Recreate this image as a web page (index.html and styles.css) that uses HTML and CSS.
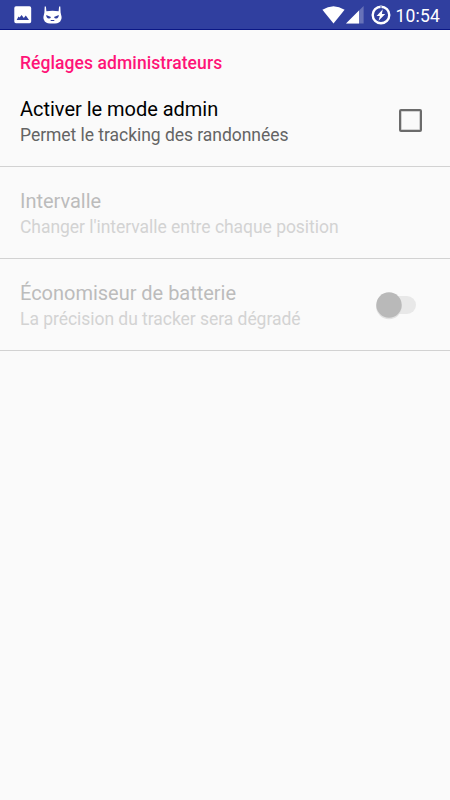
FILE: index.html
```html
<!DOCTYPE html>
<html lang="fr">
<head>
	<title>Réglages administrateurs</title>
	<meta charset="UTF-8">
	<meta name="viewport" content="width=device-width, initial-scale=1.0">
	<link rel="stylesheet" href="styles.css">
</head>
<body>
	<header class="status-bar">
		<div class="notifications">
			<svg width="18" height="18" viewBox="0 0 18 18">
				<path fill="#fff" fill-rule="evenodd" d="M2 .3h13.500a1.700 1.700 0 0 1 1.700 1.700v13.500a1.700 1.700 0 0 1-1.700 1.700H2A1.700 1.700 0 0 1 .3 15.500V2A1.700 1.700 0 0 1 2 .3zM2.700 14h12.300l-3.200-4.600-2 2.500-2.200-2.900-2 2.600-1.100-1z"/>
			</svg>
			<svg width="20" height="18" viewBox="0 0 20 18">
				<path fill="#fff" d="M1.700 .5h1.200l.5 4.700Q9.500 4.300 15.600 5.200L16.100 .5h1.200l.3 6 1 4.500q.3 2.500-1.400 4.400-2.200 2.200-7.700 2.200t-7.700-2.200Q.1 13.500.4 11l1-4.500z"/>
				<path fill="#303f9f" d="M3.200 9l4.800 1.900q-.6 1.800-2.300 1.600-2.300-.3-2.500-3.500zM15.800 9l-4.800 1.900q.6 1.800 2.300 1.600 2.300-.3 2.500-3.500z"/>
				<path fill="none" stroke="#303f9f" stroke-width="1" d="M7.700 14.500h3.600"/>
			</svg>
		</div>
		<div class="system">
			<svg class="wifi" width="23" height="18" viewBox="0 0 23 18">
				<path fill="#fff" d="M.4 3.700Q11.500-3.300 22.600 3.700L11.500 17.600z"/>
			</svg>
			<svg class="signal" width="18" height="18" viewBox="0 0 18 18">
				<path fill="#6772b8" d="M17.600 0v17.600H0z"/>
				<path fill="#fff" d="M13 4.600v13H0z"/>
			</svg>
			<svg class="battery" width="20" height="20" viewBox="0 0 20 20">
				<circle cx="10" cy="10" r="8.300" fill="none" stroke="#fff" stroke-width="2.400"/>
				<path stroke="#959dce" stroke-width="2.400" d="M9.200 1.700h1.600"/>
				<path fill="#fff" d="M11.800 4.300L5.600 10.900h3.200l-1.200 4.800 6.600-6.600h-3.300z"/>
			</svg>
			<span class="clock">10:54</span>
		</div>
	</header>
	<main>
		<h1>Réglages administrateurs</h1>
		<ul class="preferences">
			<li class="preference">
				<div class="text">
					<div class="title">Activer le mode admin</div>
					<div class="summary">Permet le tracking des randonnées</div>
				</div>
				<span class="checkbox" role="checkbox" aria-checked="false"></span>
			</li>
			<li class="preference disabled">
				<div class="text">
					<div class="title">Intervalle</div>
					<div class="summary">Changer l'intervalle entre chaque position</div>
				</div>
			</li>
			<li class="preference disabled">
				<div class="text">
					<div class="title">Économiseur de batterie</div>
					<div class="summary">La précision du tracker sera dégradé</div>
				</div>
				<svg class="switch" width="44" height="34" viewBox="0 0 44 34">
					<rect x="4" y="8" width="37" height="18" rx="9" fill="#e8e8e8"/>
					<circle cx="14" cy="18.200" r="13" fill="#e2e2e2"/>
					<circle cx="14" cy="17" r="12.700" fill="#b9b9b9"/>
				</svg>
			</li>
		</ul>
	</main>
</body>
</html>
```

FILE: styles.css
```css
body {
	margin: 0;
	min-height: 800px;
	font-family: Roboto, sans-serif;
	background-color: #fafafa;
}
.status-bar {
	display: flex;
	justify-content: space-between;
	box-sizing: border-box;
	height: 30px;
	padding: 0 10px 0 14px;
	background-color: #303f9f;
	border-bottom: 1px solid #0b1785;
	color: #fff;
}
.notifications, .system {
	display: flex;
	align-items: flex-start;
	padding-top: 6px;
}
.notifications {
	gap: 11px;
}
.signal {
	margin-left: 1px;
}
.battery {
	margin: -1px 4px 0 7px;
}
.clock {
	font-size: 17.5px;
	line-height: 20px;
	letter-spacing: 0.2px;
}
h1 {
	margin: 0;
	padding: 21px 20px 0;
	height: 24px;
	font-size: 17.5px;
	font-weight: 500;
	line-height: 25px;
	letter-spacing: 0.08px;
	color: #ff1478;
}
.preferences {
	margin: 0;
	padding: 0;
	list-style: none;
}
.preference {
	display: flex;
	align-items: center;
	justify-content: space-between;
	box-sizing: border-box;
	height: 92px;
	padding: 0 28px 0 20px;
	border-bottom: 1px solid #d2d2d2;
}
.text {
	padding-top: 2px;
}
.title {
	font-size: 20px;
	line-height: 26px;
	letter-spacing: -0.02px;
	color: #000;
}
.summary {
	padding-top: 1px;
	font-size: 17.5px;
	line-height: 24px;
	letter-spacing: -0.04px;
	color: #646464;
}
.disabled .title {
	color: #bcbcbc;
}
.disabled .summary {
	color: #d3d3d3;
}
.checkbox {
	box-sizing: border-box;
	width: 23px;
	height: 23px;
	border: 2px solid #6b6b6b;
	border-radius: 2px;
	box-shadow: inset 0 0 0 0.5px #aaa;
}
.switch {
	margin-right: 3px;
}
```
